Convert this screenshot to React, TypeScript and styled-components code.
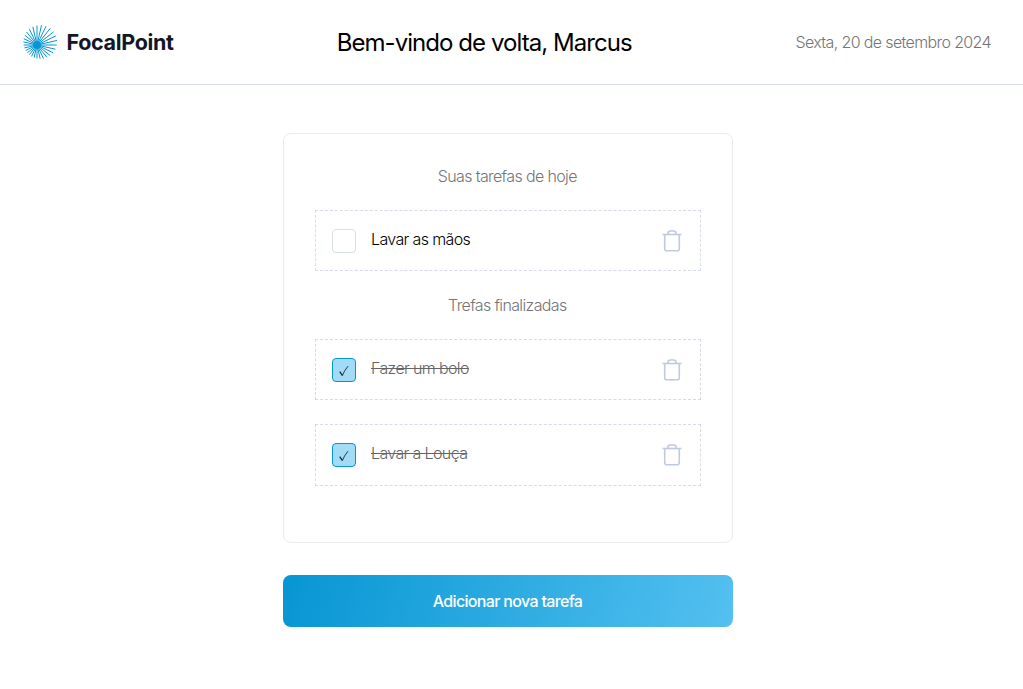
import React, { useState } from "react";
import styled, { createGlobalStyle } from "styled-components";

const GlobalStyle = createGlobalStyle`
  * { box-sizing: border-box; margin: 0; padding: 0; }
  body {
    background: #fff;
    color: #000;
    font-family: Inter, "Liberation Sans", sans-serif;
    font-size: 16px;
  }
`;

const Header = styled.header`
  display: flex;
  align-items: center;
  justify-content: space-between;
  height: 85px;
  padding: 0 32px 0 23px;
  border-bottom: 1px solid #d7deea;
`;

const Brand = styled.div`
  display: flex;
  align-items: center;
  gap: 9.5px;
  width: 150px;
`;

const BrandName = styled.span`
  color: #111729;
  font-size: 21.5px;
  font-weight: 750;
  line-height: 26px;
  letter-spacing: -0.33px;
  white-space: nowrap;
`;

const Welcome = styled.h1`
  padding-top: 2px;
  font-size: 24px;
  font-weight: 400;
  line-height: 30px;
  letter-spacing: -0.94px;
  white-space: nowrap;
`;

const Today = styled.p`
  color: #757575;
  font-weight: 300;
  line-height: 20px;
  letter-spacing: -0.63px;
  white-space: nowrap;
`;

const Main = styled.main`
  display: flex;
  flex-direction: column;
  align-items: center;
  gap: 32px;
  padding: 48px 7px 0 0;
`;

const Card = styled.section`
  display: flex;
  flex-direction: column;
  width: 450px;
  height: 410px;
  padding: 32px 31px;
  border: 1px solid #e9ebee;
  border-radius: 8px;
`;

const SectionTitle = styled.h2<{ $spaced?: boolean }>`
  margin: ${(p) => (p.$spaced ? "24px 0" : "0 0 24px")};
  padding-right: 1.4px;
  color: #757575;
  font-size: 16px;
  font-weight: 300;
  line-height: 20px;
  letter-spacing: -0.63px;
  text-align: center;
`;

const TaskList = styled.ul`
  display: flex;
  flex-direction: column;
  gap: 24px;
  list-style: none;
`;

const TaskRow = styled.li`
  display: flex;
  align-items: center;
  height: 61.2px;
  padding: 0 16px;
  border: 1px dashed #d7dbe8;
`;

const CheckBox = styled.button<{ $done: boolean }>`
  display: flex;
  align-items: center;
  justify-content: center;
  width: 24px;
  height: 24px;
  border: 1px solid ${(p) => (p.$done ? "#0796d3" : "#d7deea")};
  border-radius: 4px;
  background: ${(p) => (p.$done ? "#a1dbf5" : "#fff")};
`;

const TaskName = styled.span<{ $done: boolean }>`
  flex: 1;
  margin: 0 0 3px 15px;
  color: ${(p) => (p.$done ? "#646464" : "#000")};
  font-weight: 300;
  line-height: 20px;
  letter-spacing: -0.63px;
  text-decoration: ${(p) => (p.$done ? "line-through" : "none")};
`;

const TrashButton = styled.button`
  display: flex;
  width: 24px;
  height: 24px;
  border: 0;
  background: none;
`;

const AddButton = styled.button`
  width: 450px;
  height: 52px;
  padding-right: 1px;
  border: 0;
  border-radius: 8px;
  background: linear-gradient(103deg, #0796d3 0%, #53c0f0 100%);
  color: #fff;
  font-family: inherit;
  font-size: 16px;
  font-weight: 500;
  letter-spacing: -0.67px;
`;

const BurstIcon = styled.svg`
  flex-shrink: 0;
`;

const TickIcon = styled.svg`
  flex-shrink: 0;
`;

// Rays leave an off-centre hub at even angles and end on the outer circle.
const RAY_COUNT = 28;
const HUB = { x: 14, y: 20 };
const CIRCLE = { x: 17.2, y: 17, r: 16.8 };
const rays = Array.from({ length: RAY_COUNT }, (_, i) => {
  const a = (i * 2 * Math.PI) / RAY_COUNT;
  const dx = Math.sin(a);
  const dy = -Math.cos(a);
  const ox = HUB.x - CIRCLE.x;
  const oy = HUB.y - CIRCLE.y;
  const b = ox * dx + oy * dy;
  const t = -b + Math.sqrt(b * b - (ox * ox + oy * oy - CIRCLE.r * CIRCLE.r));
  return `M${HUB.x} ${HUB.y}L${(HUB.x + t * dx).toFixed(2)} ${(HUB.y + t * dy).toFixed(2)}`;
}).join("");

const Burst = () => (
  <BurstIcon width="34" height="34" viewBox="0 0 34 34">
    <path d={rays} stroke="#0796d3" strokeWidth="1" fill="none" />
    <circle cx={HUB.x} cy={HUB.y} r="3.8" fill="#0796d3" />
  </BurstIcon>
);

const Tick = () => (
  <TickIcon width="24" height="24" viewBox="0 0 24 24" fill="none" stroke="#142a35">
    <path d="M7.7 13.6L10.3 17.4" strokeWidth="1.3" />
    <path d="M10.2 17.9Q12.2 12.6 16 8.2" strokeWidth="0.9" />
  </TickIcon>
);

const Trash = () => (
  <svg width="24" height="24" viewBox="0 0 24 24" fill="none" stroke="#bfcadd" strokeWidth="1.6">
    <path d="M2.5 5.5H21.5" />
    <path d="M8 5.3V4.3Q8 2 10.3 2H13.7Q16 2 16 4.3V5.3" />
    <path d="M4.7 5.5V19.4Q4.7 21.7 7 21.7H17Q19.3 21.7 19.3 19.4V5.5" />
  </svg>
);

type Task = { id: number; name: string; done: boolean };

const initialTasks: Task[] = [
  { id: 1, name: "Lavar as mãos", done: false },
  { id: 2, name: "Fazer um bolo", done: true },
  { id: 3, name: "Lavar a Louça", done: true },
];

export default function App() {
  const [tasks, setTasks] = useState(initialTasks);
  const toggle = (id: number) =>
    setTasks(tasks.map((t) => (t.id === id ? { ...t, done: !t.done } : t)));
  const remove = (id: number) => setTasks(tasks.filter((t) => t.id !== id));

  const renderTasks = (done: boolean) => (
    <TaskList>
      {tasks
        .filter((t) => t.done === done)
        .map((t) => (
          <TaskRow key={t.id}>
            <CheckBox $done={t.done} onClick={() => toggle(t.id)}>
              {t.done && <Tick />}
            </CheckBox>
            <TaskName $done={t.done}>{t.name}</TaskName>
            <TrashButton onClick={() => remove(t.id)}>
              <Trash />
            </TrashButton>
          </TaskRow>
        ))}
    </TaskList>
  );

  return (
    <>
      <GlobalStyle />
      <Header>
        <Brand>
          <Burst />
          <BrandName>FocalPoint</BrandName>
        </Brand>
        <Welcome>Bem-vindo de volta, Marcus</Welcome>
        <Today>Sexta, 20 de setembro 2024</Today>
      </Header>
      <Main>
        <Card>
          <SectionTitle>Suas tarefas de hoje</SectionTitle>
          {renderTasks(false)}
          <SectionTitle $spaced>Trefas finalizadas</SectionTitle>
          {renderTasks(true)}
        </Card>
        <AddButton>Adicionar nova tarefa</AddButton>
      </Main>
    </>
  );
}
